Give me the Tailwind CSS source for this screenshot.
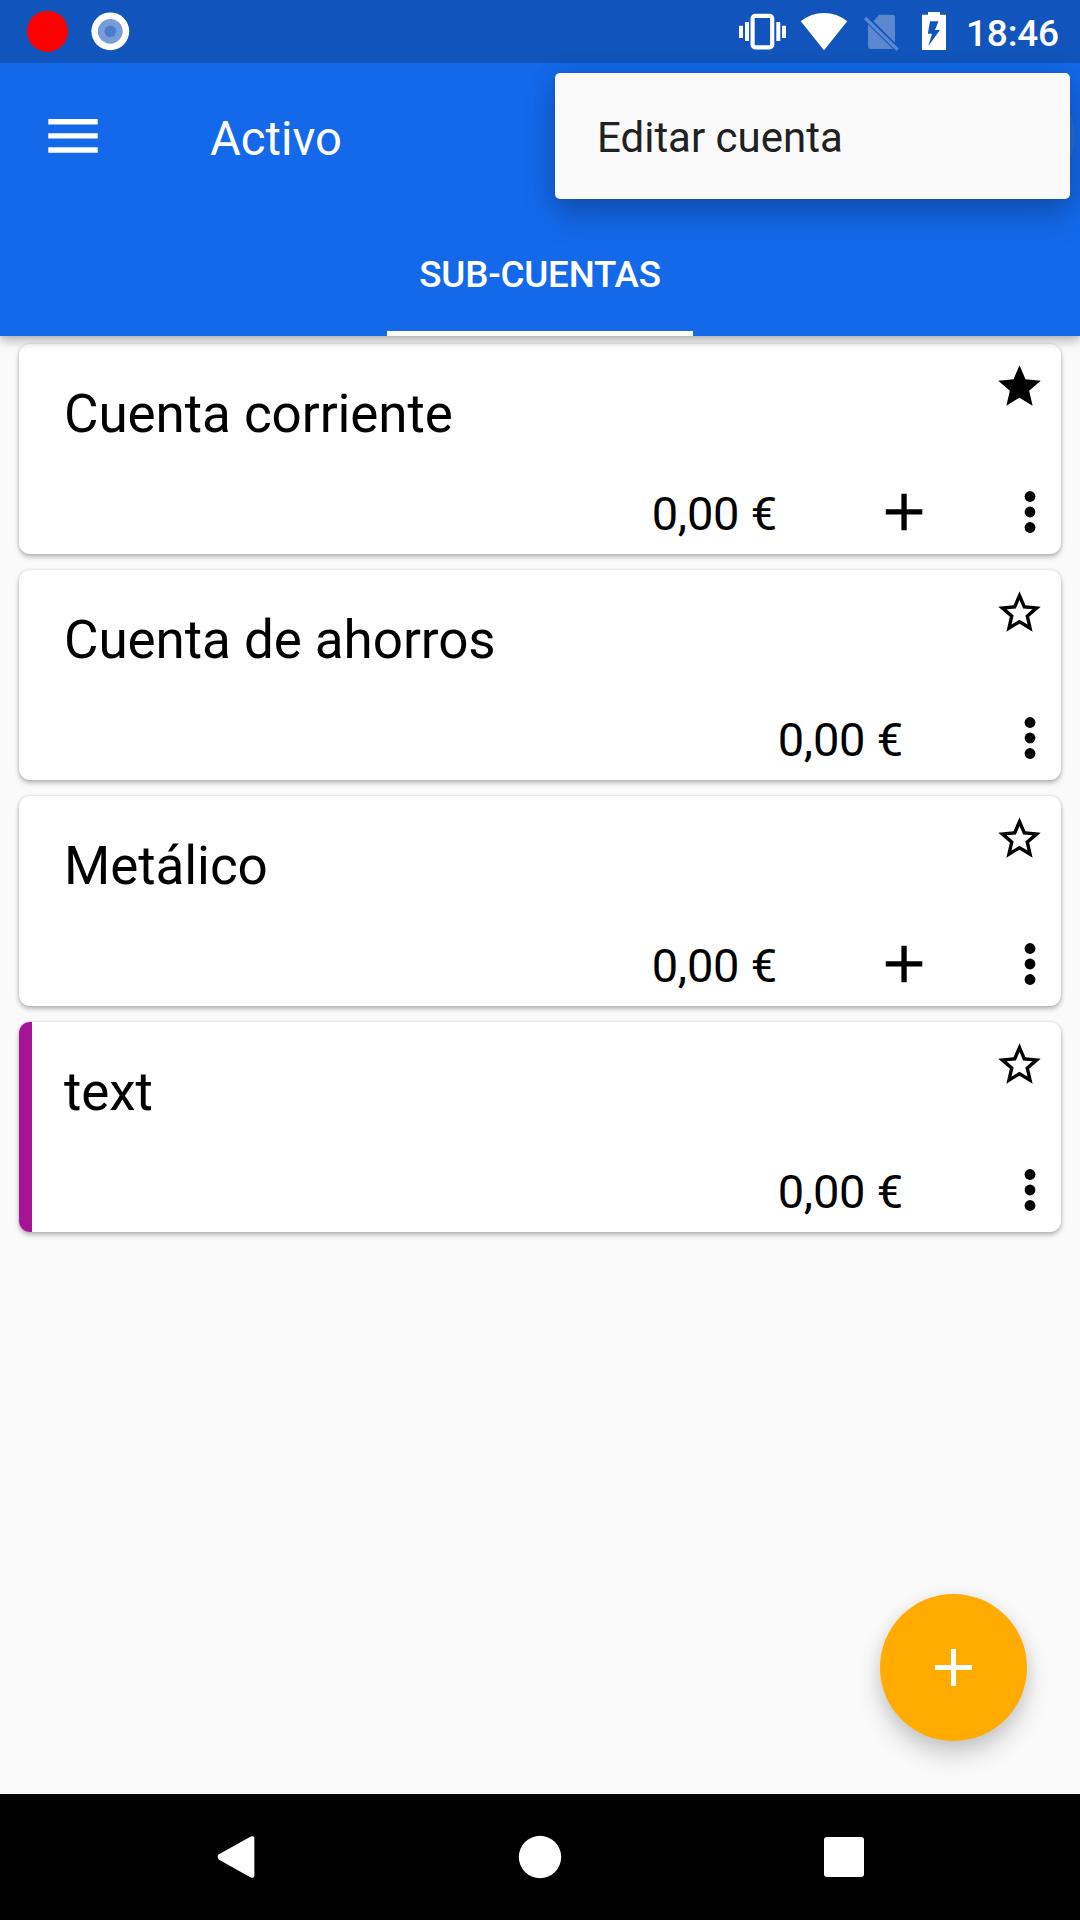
<!DOCTYPE html>
<html lang="es">
<head>
<meta charset="utf-8">
<title>Activo</title>
<script src="https://cdn.jsdelivr.net/npm/@tailwindcss/browser@4"></script>
</head>
<body class="bg-[#fafafa]">
<svg class="hidden">
  <symbol id="star" viewBox="0 0 24 24"><path d="M12 17.27L18.18 21l-1.64-7.03L22 9.24l-7.19-.61L12 2 9.19 8.63 2 9.24l5.46 4.73L5.82 21z"/></symbol>
  <symbol id="star-outline" viewBox="0 0 24 24"><path d="M22 9.24l-7.19-.62L12 2 9.19 8.63 2 9.24l5.46 4.73L5.82 21 12 17.27 18.18 21l-1.63-7.03L22 9.24zM12 15.4l-3.76 2.27 1-4.28-3.32-2.88 4.38-.38L12 6.1l1.71 4.04 4.38.38-3.32 2.88 1 4.28L12 15.4z"/></symbol>
  <symbol id="more" viewBox="0 0 63 56"><circle cx="32" cy="12.5" r="5.4"/><circle cx="32" cy="28" r="5.4"/><circle cx="32" cy="43.5" r="5.4"/></symbol>
  <symbol id="plus" viewBox="0 0 126 56"><path d="M60.4 9.7h5.3v15.6h15.6v5.3H65.7v15.6h-5.3V30.6H44.8v-5.3h15.6z"/></symbol>
</svg>
<div class="relative flex h-[1920px] w-[1080px] flex-col overflow-hidden bg-[#fafafa] font-[Roboto,sans-serif] text-black">

  <header class="relative z-10 flex flex-col bg-[#1469eb] text-white shadow-[0_5px_10px_rgba(0,0,0,0.26),0_0_4px_rgba(0,0,0,0.12)]">
    <div class="flex h-[63px] items-center justify-between bg-[#1155bc]">
      <svg class="h-[63px] w-[140px]" viewBox="0 0 140 63">
        <circle cx="47.5" cy="31.3" r="20.5" fill="#f00"/>
        <circle cx="110.3" cy="31.3" r="18.9" fill="#fff"/>
        <circle cx="110.3" cy="31.3" r="12.4" fill="#779dd8"/>
        <circle cx="110.3" cy="31.3" r="5.8" fill="#4a7dcd"/>
      </svg>
      <div class="flex h-[63px] items-center">
        <svg class="h-[63px] w-[234px]" viewBox="732 0 234 63" fill="#fff">
          <rect x="752.6" y="15.9" width="19.6" height="31.4" rx="2.5" fill="none" stroke="#fff" stroke-width="4.2"/>
          <path d="M745 22h4v19h-4zM739 25.7h4V38h-4zM776.3 22h4v19h-4zM782 25.7h4V38h-4z"/>
          <path d="M824 50.3L800.8 21.3Q811 13 824 13T847.2 21.3z"/>
          <g fill="#5b88cf">
            <path d="M879 14.7H892.300Q895 14.700 895 17.400V42.800L873.500 21.300z"/>
            <path d="M868 24.500L893 49H871Q868 49 868 46z"/>
            <path d="M866.200 16.800L898.700 48.500L896.500 51L864 19.300z"/>
          </g>
          <path fill-rule="evenodd" d="M922 14.800h6V12h12v2.800h6V50h-24zM930 21.300L927.800 33.700H932L928.300 46L940 30H935L938.500 21.300z"/>
        </svg>
        <span class="w-[114px] pt-[3px] text-[37px] font-medium leading-none tracking-[-0.2px]">18:46</span>
      </div>
    </div>
    <div class="flex h-[147px] items-center">
      <svg class="h-[147px] w-[210px]" viewBox="0 63 210 147" fill="#fff"><path d="M48.300 119H97.700v5.400H48.300zM48.300 133.200H97.700v5.400H48.300zM48.300 147.300H97.700v5.400H48.300z"/></svg>
      <h1 class="pt-[7px] text-[47.25px] leading-none">Activo</h1>
    </div>
    <nav class="flex h-[126px] justify-center">
      <div class="flex w-[306px] items-center justify-center border-b-5 border-white pt-[10px] text-[36.75px] font-medium leading-none tracking-[-0.2px]">SUB-CUENTAS</div>
    </nav>
    <div class="absolute left-[970px] top-[84px] size-[105px] rounded-full bg-[#9a9a9a]/15"></div>
    <div class="absolute left-[555px] top-[73px] flex h-[126px] w-[515px] items-center rounded-[5px] bg-[#fafafa] px-[42px] pt-[3px] text-[42px] leading-none text-[#212121] shadow-[0_16px_32px_rgba(0,0,0,0.22),0_0_24px_rgba(0,0,0,0.12)]">Editar cuenta</div>
  </header>

  <main class="flex flex-1 flex-col gap-4 px-[19px] pt-2">
    <article class="flex h-[210px] flex-col overflow-hidden rounded-[11px] bg-white shadow-[0_3px_5px_rgba(0,0,0,0.26),0_0_3px_rgba(0,0,0,0.14)]">
      <div class="flex h-[140px] items-center justify-between pl-[45px] pr-[16.5px]">
        <h2 class="text-[53px] leading-none tracking-[-0.07px]">Cuenta corriente</h2>
        <svg class="mt-[16.5px] size-[51px] self-start"><use href="#star"/></svg>
      </div>
      <div class="flex h-[56px] items-center justify-end">
        <span class="mr-[64px] pt-[3px] text-[47px] leading-none tracking-[-0.2px]">0,00 €</span>
        <svg class="h-[56px] w-[126px]"><use href="#plus"/></svg>
        <svg class="ml-[31px] h-[56px] w-[63px]"><use href="#more"/></svg>
      </div>
    </article>
    <article class="flex h-[210px] flex-col overflow-hidden rounded-[11px] bg-white shadow-[0_3px_5px_rgba(0,0,0,0.26),0_0_3px_rgba(0,0,0,0.14)]">
      <div class="flex h-[140px] items-center justify-between pl-[45px] pr-[16.5px]">
        <h2 class="text-[53px] leading-none tracking-[-0.07px]">Cuenta de ahorros</h2>
        <svg class="mt-[16.5px] size-[51px] self-start"><use href="#star-outline"/></svg>
      </div>
      <div class="flex h-[56px] items-center justify-end">
        <span class="mr-[64px] pt-[3px] text-[47px] leading-none tracking-[-0.2px]">0,00 €</span>
        <svg class="ml-[31px] h-[56px] w-[63px]"><use href="#more"/></svg>
      </div>
    </article>
    <article class="flex h-[210px] flex-col overflow-hidden rounded-[11px] bg-white shadow-[0_3px_5px_rgba(0,0,0,0.26),0_0_3px_rgba(0,0,0,0.14)]">
      <div class="flex h-[140px] items-center justify-between pl-[45px] pr-[16.5px]">
        <h2 class="text-[53px] leading-none tracking-[-0.07px]">Metálico</h2>
        <svg class="mt-[16.5px] size-[51px] self-start"><use href="#star-outline"/></svg>
      </div>
      <div class="flex h-[56px] items-center justify-end">
        <span class="mr-[64px] pt-[3px] text-[47px] leading-none tracking-[-0.2px]">0,00 €</span>
        <svg class="h-[56px] w-[126px]"><use href="#plus"/></svg>
        <svg class="ml-[31px] h-[56px] w-[63px]"><use href="#more"/></svg>
      </div>
    </article>
    <article class="flex h-[210px] overflow-hidden rounded-[11px] bg-white shadow-[0_3px_5px_rgba(0,0,0,0.26),0_0_3px_rgba(0,0,0,0.14)]">
      <div class="w-[13px] bg-[#a51497]"></div>
      <div class="flex flex-1 flex-col">
        <div class="flex h-[140px] items-center justify-between pl-[32px] pr-[16.5px]">
          <h2 class="text-[53px] leading-none tracking-[-0.07px]">text</h2>
          <svg class="mt-[16.5px] size-[51px] self-start"><use href="#star-outline"/></svg>
        </div>
        <div class="flex h-[56px] items-center justify-end">
          <span class="mr-[64px] pt-[3px] text-[47px] leading-none tracking-[-0.2px]">0,00 €</span>
          <svg class="ml-[31px] h-[56px] w-[63px]"><use href="#more"/></svg>
        </div>
      </div>
    </article>
  </main>

  <button class="absolute left-[880px] top-[1594px] flex size-[147px] items-center justify-center rounded-full bg-[#ffab00] shadow-[0_14px_24px_rgba(0,0,0,0.18),0_2px_16px_rgba(0,0,0,0.08)]">
    <svg class="size-[37px]" viewBox="0 0 37 37" fill="#fff"><path d="M16 0h5v16h16v5H21v16h-5V21H0v-5h16z"/></svg>
  </button>

  <footer class="z-10 flex h-[126px] items-center bg-black">
    <svg class="h-[126px] w-[1080px]" viewBox="0 1794 1080 126" fill="#fff">
      <path d="M219 1854.300L250.800 1836.500Q254.400 1835.300 254.400 1838.500V1875.500Q254.400 1878.700 250.800 1877.500L219 1859.700Q216.200 1857 219 1854.300z"/>
      <circle cx="540" cy="1857" r="21.200"/>
      <rect x="824" y="1837" width="40" height="40" rx="3"/>
    </svg>
  </footer>
</div>
</body>
</html>
